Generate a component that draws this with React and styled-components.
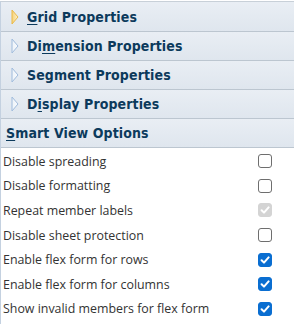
import React from 'react';
import styled, { createGlobalStyle } from 'styled-components';

const GlobalStyle = createGlobalStyle`
  body {
    margin: 0;
    background: #fff;
  }
`;

const sections = [
  { label: 'Grid Properties', key: 0, active: true },
  { label: 'Dimension Properties', key: 2 },
  { label: 'Segment Properties', key: -1 },
  { label: 'Display Properties', key: 1 },
];

const options = [
  { label: 'Disable spreading', state: 'off' },
  { label: 'Disable formatting', state: 'off' },
  { label: 'Repeat member labels', state: 'disabled' },
  { label: 'Disable sheet protection', state: 'off' },
  { label: 'Enable flex form for rows', state: 'on' },
  { label: 'Enable flex form for columns', state: 'on' },
  { label: 'Show invalid members for flex form', state: 'on' },
];

const Mnemonic = ({ text, at }) =>
  at < 0 ? (
    text
  ) : (
    <>
      {text.slice(0, at)}
      <u>{text[at]}</u>
      {text.slice(at + 1)}
    </>
  );

const Arrow = ({ active }) => (
  <svg width="8" height="16" viewBox="0 0 8 16">
    <defs>
      <linearGradient id={active ? 'ag' : 'ab'} x1="0" y1="0" x2="1" y2="0">
        <stop offset="0" stopColor={active ? '#f6d27a' : '#eef3f9'} />
        <stop offset="1" stopColor={active ? '#fdf0c8' : '#f7fafd'} />
      </linearGradient>
    </defs>
    <path
      d="M1 1 L7 8 L1 15 Z"
      fill={`url(#${active ? 'ag' : 'ab'})`}
      stroke={active ? '#e9b949' : '#9fbbdc'}
      strokeWidth="1"
      strokeLinejoin="round"
    />
  </svg>
);

const Check = ({ state }) => (
  <Box $state={state}>
    {state !== 'off' && (
      <svg width="10" height="10" viewBox="0 0 10 10">
        <path
          d="M1.6 5.2 L4 7.6 L8.6 2.4"
          fill="none"
          stroke="#fff"
          strokeWidth="2"
          strokeLinecap="round"
          strokeLinejoin="round"
        />
      </svg>
    )}
  </Box>
);

const App = () => (
  <>
    <GlobalStyle />
    <Panel>
      {sections.map((s, i) => (
        <Header key={s.label} $first={i === 0}>
          <Arrow active={s.active} />
          <Title>
            <Mnemonic text={s.label} at={s.key} />
          </Title>
        </Header>
      ))}
      <Header $plain>
        <Title>
          <Mnemonic text="Smart View Options" at={0} />
        </Title>
      </Header>
      <Options>
        {options.map((o) => (
          <Row key={o.label}>
            <Label>{o.label}</Label>
            <Check state={o.state} />
          </Row>
        ))}
      </Options>
    </Panel>
  </>
);

export default App;

const Panel = styled.div`
  width: 294px;
  height: 323px;
  margin-top: 1px;
  border-left: 1px solid #c4d1e0;
  border-top: 1px solid #c8d0d8;
  box-sizing: border-box;
`;

const Header = styled.div`
  display: flex;
  align-items: center;
  gap: 8px;
  height: ${(p) => (p.$first ? '29px' : '28px')};
  padding-left: ${(p) => (p.$plain ? '5px' : '10px')};
  background: linear-gradient(#e9eef4, #dfe6ee);
  border-bottom: 1px solid #bcc6d0;
`;

const Title = styled.span`
  font-family: 'DejaVu Sans Condensed', 'DejaVu Sans', Verdana, sans-serif;
  font-stretch: condensed;
  font-weight: bold;
  font-size: 14px;
  letter-spacing: 0.1px;
  color: #0c3a5c;
  u {
    text-decoration-thickness: 1px;
    text-underline-offset: 2px;
  }
`;

const Options = styled.div`
  display: flex;
  flex-direction: column;
  padding-top: 1px;
`;

const Row = styled.div`
  display: flex;
  align-items: center;
  justify-content: space-between;
  height: 24.6px;
  padding: 0 22px 0 2px;
`;

const Label = styled.span`
  font-family: 'Open Sans', sans-serif;
  font-size: 12.4px;
  color: #333;
`;

const Box = styled.span`
  display: flex;
  align-items: center;
  justify-content: center;
  width: 14px;
  height: 14px;
  box-sizing: border-box;
  border-radius: 3px;
  border: 1px solid
    ${(p) =>
      p.$state === 'on' ? '#0a6ed1' : p.$state === 'disabled' ? '#d4d4d4' : '#6e6e6e'};
  background: ${(p) =>
    p.$state === 'on' ? '#0a6ed1' : p.$state === 'disabled' ? '#d4d4d4' : '#fff'};
`;
